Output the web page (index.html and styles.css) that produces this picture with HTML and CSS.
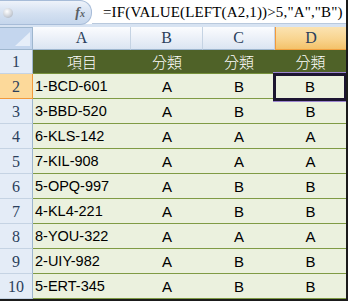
FILE: index.html
```html
<!DOCTYPE html>
<html lang="zh-Hant">
<head>
  <meta charset="UTF-8">
  <title>分類</title>
  <link rel="stylesheet" href="styles.css">
</head>
<body>
  <div class="window">
    <div class="formula-bar">
      <div class="fx-box">
        <span class="knob"></span>
        <span class="fx">f<small>x</small></span>
      </div>
      <div class="formula">=IF(VALUE(LEFT(A2,1))&gt;5,"A","B")</div>
    </div>
    <div class="strip"></div>

    <div class="sheet">
      <div class="corner"><span class="tri"></span></div>
      <div class="col-head">A</div>
      <div class="col-head">B</div>
      <div class="col-head">C</div>
      <div class="col-head active">D</div>
    </div>
    <div class="sheet" id="rows"></div>
  </div>

  <script>
    const items = [
      ["1-BCD-601", "A", "B", "B"],
      ["3-BBD-520", "A", "B", "B"],
      ["6-KLS-142", "A", "A", "A"],
      ["7-KIL-908", "A", "A", "A"],
      ["5-OPQ-997", "A", "B", "B"],
      ["4-KL4-221", "A", "B", "B"],
      ["8-YOU-322", "A", "A", "A"],
      ["2-UIY-982", "A", "B", "B"],
      ["5-ERT-345", "A", "B", "B"]
    ];
    const rows = document.getElementById("rows");

    let html = `<div class="row-head first">1</div>
      <div class="cell title">項目</div>
      <div class="cell title">分類</div>
      <div class="cell title">分類</div>
      <div class="cell title">分類</div>`;

    items.forEach((it, i) => {
      const n = i + 2;
      html += `<div class="row-head${n === 2 ? " active" : ""}">${n}</div>`;
      html += `<div class="cell item">${it[0]}</div>`;
      html += `<div class="cell">${it[1]}</div>`;
      html += `<div class="cell">${it[2]}</div>`;
      html += `<div class="cell${n === 2 ? " selected" : ""}">${it[3]}</div>`;
    });
    rows.innerHTML = html;
  </script>
</body>
</html>
```

FILE: styles.css
```css
body {
  margin: 0;
  background: #ffffff;
}

.window {
  width: 346px;
  border-right: 2px solid #1b1b1b;
  border-bottom: 2px solid #1b1b1b;
  overflow: hidden;
}

.formula-bar {
  display: flex;
  height: 24px;
  background: #ffffff;
}

.fx-box {
  position: relative;
  width: 91px;
  height: 23px;
  border: 1px solid #a7bcd8;
  border-left: none;
  border-radius: 0 12px 12px 0;
  background: linear-gradient(#eef3fa, #d3e0f1 55%, #c5d6ec);
  display: flex;
  align-items: center;
}

.knob {
  width: 10px;
  height: 10px;
  margin-left: 3px;
  border-radius: 50%;
  background: radial-gradient(circle at 40% 35%, #ffffff, #c9ced6 60%, #9aa3af);
}

.fx {
  margin-left: auto;
  margin-right: 6px;
  font-family: "Liberation Serif", serif;
  font-style: italic;
  font-weight: bold;
  font-size: 14px;
  color: #5a5e64;
}

.fx small {
  font-size: 10px;
}

.formula {
  flex: 1;
  padding-left: 11px;
  font-family: "Liberation Serif", serif;
  font-size: 15px;
  letter-spacing: 0.15px;
  line-height: 24px;
  color: #000000;
  white-space: nowrap;
  border-bottom: 1px solid #b9c9dd;
  box-sizing: border-box;
  height: 24px;
}

.strip {
  height: 3px;
  background: #d7e3f2;
}

.sheet {
  display: grid;
  grid-template-columns: 33px 98px 72px 72px 71px;
}

.corner {
  border: 1px solid #9eb6ce;
  border-left: none;
  box-sizing: border-box;
  height: 23px;
  background: #c4d6ee;
  display: flex;
  align-items: flex-end;
  justify-content: flex-end;
  padding: 0 2px 3px 0;
}

.tri {
  width: 0;
  height: 0;
  border-left: 15px solid transparent;
  border-bottom: 14px solid #e6eef9;
}

.col-head {
  height: 23px;
  box-sizing: border-box;
  border-right: 1px solid #c5d3e3;
  border-bottom: 1px solid #9eb6ce;
  background: linear-gradient(#fbfcfe, #e8eef7 60%, #dbe5f2);
  font-family: "Liberation Serif", serif;
  font-size: 16px;
  line-height: 22px;
  text-align: center;
  color: #2b3f5c;
}

.col-head.active {
  background: linear-gradient(#fbe3b2, #f8d48f 55%, #f3c26a);
  border-left: 1px solid #f29a3c;
  border-right: none;
  border-bottom: 1px solid #f0a040;
}

.row-head {
  height: 25px;
  box-sizing: border-box;
  border-right: 1px solid #9eb6ce;
  border-bottom: 1px solid #c5d3e3;
  background: #e4ecf7;
  font-family: "Liberation Serif", serif;
  font-size: 16px;
  line-height: 25px;
  text-align: center;
  color: #2b3f5c;
}

.row-head.first {
  height: 24px;
  line-height: 24px;
}

.row-head.active {
  background: #fcd99a;
  border-right: 1px solid #f29a3c;
  border-bottom: 1px solid #f29a3c;
}

.cell {
  height: 25px;
  box-sizing: border-box;
  border-bottom: 1px solid #7f9b44;
  background: #ebf1de;
  font-family: "Liberation Sans", Arial, sans-serif;
  font-size: 15px;
  line-height: 25px;
  text-align: center;
  color: #000000;
}

.cell.title {
  height: 24px;
  line-height: 23px;
  background: #4f6228;
  border-bottom: 1px solid #76923c;
  font-family: "Noto Sans CJK TC", sans-serif;
  font-weight: 300;
  font-size: 15px;
  color: #ffffff;
}

.cell.item {
  text-align: left;
  padding-left: 2px;
  font-size: 14.5px;
}

.cell.selected {
  position: relative;
  border: 3px solid #1c1530;
  border-right-width: 2px;
  box-shadow: 0 -1px 0 #9b85cf, 0 1px 0 #9b85cf;
  margin: -1px 0 -2px -2px;
  height: 28px;
  line-height: 21px;
}
```
